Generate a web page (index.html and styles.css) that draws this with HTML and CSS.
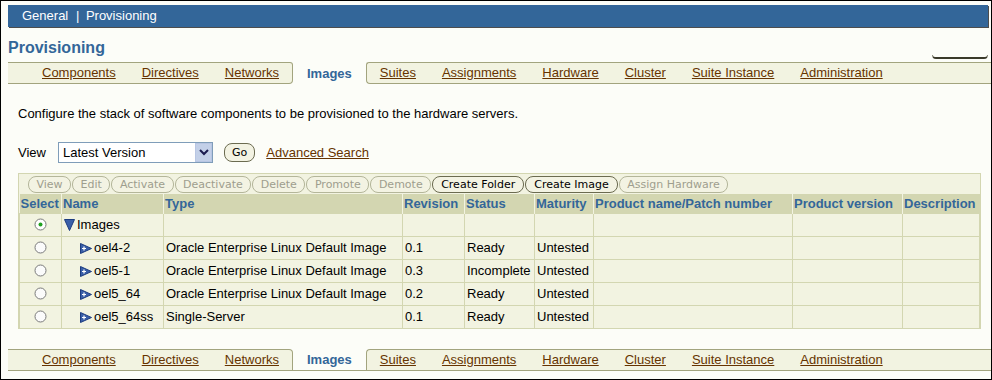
FILE: index.html
```html
<!DOCTYPE html>
<html lang="en">

<head>
    <meta charset="UTF-8">
    <title>Provisioning - Images</title>
    <link rel="stylesheet" href="styles.css">
</head>

<body>
    <div class="frame">

        <div class="global-bar">
            <span>General</span>
            <span class="sep">|</span>
            <span>Provisioning</span>
        </div>

        <div class="title-row">
            <h1>Provisioning</h1>
            <div class="cut-btn"></div>
        </div>

        <!-- barra de abas superior -->
        <div class="subtabs top">
            <div class="seg seg-left">
                <a href="#">Components</a>
                <a href="#">Directives</a>
                <a href="#">Networks</a>
            </div>
            <div class="tab-current">Images</div>
            <div class="seg seg-right">
                <a href="#">Suites</a>
                <a href="#">Assignments</a>
                <a href="#">Hardware</a>
                <a href="#">Cluster</a>
                <a href="#">Suite Instance</a>
                <a href="#">Administration</a>
            </div>
        </div>

        <p class="intro">Configure the stack of software components to be provisioned to the hardware servers.</p>

        <div class="view-row">
            <label for="viewSelect">View</label>
            <div class="fake-select" id="viewSelect">
                <span>Latest Version</span>
                <span class="arrow">
                    <svg width="10" height="8" viewBox="0 0 10 8"><path d="M1 2 L5 6 L9 2" fill="none" stroke="#1c1c50" stroke-width="2"/></svg>
                </span>
            </div>
            <button class="pill">Go</button>
            <a href="#" class="adv">Advanced Search</a>
        </div>

        <div class="results">
            <div class="toolbar">
                <button class="pill off">View</button>
                <button class="pill off">Edit</button>
                <button class="pill off">Activate</button>
                <button class="pill off">Deactivate</button>
                <button class="pill off">Delete</button>
                <button class="pill off">Promote</button>
                <button class="pill off">Demote</button>
                <button class="pill">Create Folder</button>
                <button class="pill">Create Image</button>
                <button class="pill off">Assign Hardware</button>
            </div>
            <table>
                <thead>
                    <tr>
                        <th class="c-sel">Select</th>
                        <th class="c-name">Name</th>
                        <th class="c-type">Type</th>
                        <th class="c-rev">Revision</th>
                        <th class="c-status">Status</th>
                        <th class="c-mat">Maturity</th>
                        <th class="c-prod">Product name/Patch number</th>
                        <th class="c-pver">Product version</th>
                        <th class="c-desc">Description</th>
                    </tr>
                </thead>
                <tbody>
                    <tr>
                        <td class="radio-cell">
                            <svg width="13" height="13" viewBox="0 0 13 13"><circle cx="6.5" cy="6.5" r="5.5" fill="#fff" stroke="#7a7a7a"/><circle cx="6.5" cy="6.5" r="2" fill="#21a121"/></svg>
                        </td>
                        <td class="name">
                            <svg class="tri" width="11" height="12" viewBox="0 0 11 12"><path d="M0.5 0.5 H10.5 L5.5 11.5 Z" fill="#3a5fa8" stroke="#1d3c80"/></svg>Images
                        </td>
                        <td></td><td></td><td></td><td></td><td></td><td></td><td></td>
                    </tr>
                    <tr>
                        <td class="radio-cell"><svg width="13" height="13" viewBox="0 0 13 13"><circle cx="6.5" cy="6.5" r="5.5" fill="#fbfbfb" stroke="#7a7a7a"/></svg></td>
                        <td class="name child"><svg class="tri" width="12" height="11" viewBox="0 0 12 11"><path d="M0.5 0.5 L11.5 5.5 L0.5 10.5 Z" fill="#3a5fa8" stroke="#1d3c80"/><path d="M2 5.5 H6 M4 3.5 V7.5" stroke="#fff" stroke-width="1.2"/></svg>oel4-2</td>
                        <td>Oracle Enterprise Linux Default Image</td>
                        <td>0.1</td><td>Ready</td><td>Untested</td><td></td><td></td><td></td>
                    </tr>
                    <tr>
                        <td class="radio-cell"><svg width="13" height="13" viewBox="0 0 13 13"><circle cx="6.5" cy="6.5" r="5.5" fill="#fbfbfb" stroke="#7a7a7a"/></svg></td>
                        <td class="name child"><svg class="tri" width="12" height="11" viewBox="0 0 12 11"><path d="M0.5 0.5 L11.5 5.5 L0.5 10.5 Z" fill="#3a5fa8" stroke="#1d3c80"/><path d="M2 5.5 H6 M4 3.5 V7.5" stroke="#fff" stroke-width="1.2"/></svg>oel5-1</td>
                        <td>Oracle Enterprise Linux Default Image</td>
                        <td>0.3</td><td>Incomplete</td><td>Untested</td><td></td><td></td><td></td>
                    </tr>
                    <tr>
                        <td class="radio-cell"><svg width="13" height="13" viewBox="0 0 13 13"><circle cx="6.5" cy="6.5" r="5.5" fill="#fbfbfb" stroke="#7a7a7a"/></svg></td>
                        <td class="name child"><svg class="tri" width="12" height="11" viewBox="0 0 12 11"><path d="M0.5 0.5 L11.5 5.5 L0.5 10.5 Z" fill="#3a5fa8" stroke="#1d3c80"/><path d="M2 5.5 H6 M4 3.5 V7.5" stroke="#fff" stroke-width="1.2"/></svg>oel5_64</td>
                        <td>Oracle Enterprise Linux Default Image</td>
                        <td>0.2</td><td>Ready</td><td>Untested</td><td></td><td></td><td></td>
                    </tr>
                    <tr>
                        <td class="radio-cell"><svg width="13" height="13" viewBox="0 0 13 13"><circle cx="6.5" cy="6.5" r="5.5" fill="#fbfbfb" stroke="#7a7a7a"/></svg></td>
                        <td class="name child"><svg class="tri" width="12" height="11" viewBox="0 0 12 11"><path d="M0.5 0.5 L11.5 5.5 L0.5 10.5 Z" fill="#3a5fa8" stroke="#1d3c80"/><path d="M2 5.5 H6 M4 3.5 V7.5" stroke="#fff" stroke-width="1.2"/></svg>oel5_64ss</td>
                        <td>Single-Server</td>
                        <td>0.1</td><td>Ready</td><td>Untested</td><td></td><td></td><td></td>
                    </tr>
                </tbody>
            </table>
        </div>

        <!-- barra de abas inferior -->
        <div class="subtabs bottom">
            <div class="seg seg-left">
                <a href="#">Components</a>
                <a href="#">Directives</a>
                <a href="#">Networks</a>
            </div>
            <div class="tab-current">Images</div>
            <div class="seg seg-right">
                <a href="#">Suites</a>
                <a href="#">Assignments</a>
                <a href="#">Hardware</a>
                <a href="#">Cluster</a>
                <a href="#">Suite Instance</a>
                <a href="#">Administration</a>
            </div>
        </div>

    </div>
</body>

</html>
```

FILE: styles.css
```css
body,
html {
    margin: 0;
    padding: 0;
    font-family: "Liberation Sans", Arial, sans-serif;
    font-size: 12px;
    background: #fcfdf8;
}

.frame {
    box-sizing: border-box;
    width: 992px;
    height: 380px;
    border: 1px solid #000;
    background: #fcfdf8;
    overflow: hidden;
}

.global-bar {
    height: 22px;
    margin: 4px 3px 0 7px;
    padding-left: 14px;
    background: #336699;
    box-shadow: 1px 1px 0 #4d4d4d;
    color: #fff;
    font-size: 13px;
    line-height: 22px;
}

.global-bar .sep {
    margin: 0 3px 0 4px;
}

.title-row {
    display: flex;
    justify-content: space-between;
    align-items: flex-end;
    height: 32px;
    margin-left: 7px;
}

h1 {
    margin: 0 0 2px 0;
    font-size: 16px;
    line-height: 18px;
    color: #336699;
}

.cut-btn {
    width: 54px;
    height: 2px;
    margin: 0 3px 0 0;
    border-bottom: 2px solid #3a3a2a;
    border-left: 1px solid #8a8a7a;
    border-right: 1px solid #8a8a7a;
    border-radius: 0 0 4px 4px;
}

/* abas */
.subtabs {
    display: flex;
    height: 22px;
    margin: 3px 0 0 7px;
    font-size: 13px;
}

.seg {
    display: flex;
    box-sizing: border-box;
    height: 22px;
    background: #f2f3e1;
    border-top: 1px solid #a2a47e;
    border-bottom: 1px solid #a2a47e;
}

.seg-left {
    padding-left: 21px;
    border-right: 1px solid #a2a47e;
}

.seg-right {
    flex: 1;
    border-left: 1px solid #a2a47e;
}

.top .seg-left {
    border-radius: 0 3px 4px 0;
}

.top .seg-right {
    border-radius: 3px 0 0 4px;
}

.bottom .seg-left {
    border-radius: 0 4px 0 0;
}

.bottom .seg-right {
    border-radius: 4px 0 0 0;
}

.seg a {
    padding: 0 13px;
    line-height: 20px;
    color: #663300;
}

.tab-current {
    box-sizing: border-box;
    height: 22px;
    padding: 2px 14px 0 14px;
    color: #336699;
    font-weight: bold;
    line-height: 20px;
}

.bottom .tab-current {
    border-bottom: 1px solid #a2a47e;
    padding-top: 1px;
}

.intro {
    margin: 22px 0 0 17px;
    font-size: 13px;
    line-height: 16px;
    color: #000;
}

.view-row {
    display: flex;
    align-items: center;
    margin: 19px 0 0 17px;
    height: 22px;
    font-size: 13px;
}

.view-row label {
    width: 40px;
}

.fake-select {
    box-sizing: border-box;
    display: flex;
    align-items: center;
    justify-content: space-between;
    width: 155px;
    height: 21px;
    border: 1px solid #7f9db9;
    background: #fff;
    padding-left: 4px;
}

.fake-select .arrow {
    box-sizing: border-box;
    display: flex;
    align-items: center;
    justify-content: center;
    width: 17px;
    height: 19px;
    background: #c3d0e8;
    border: 1px solid #b8c6e3;
}

.pill {
    box-sizing: border-box;
    height: 17px;
    padding: 0 8px;
    font-family: "DejaVu Sans", Verdana, sans-serif;
    font-size: 11px;
    line-height: 15px;
    color: #000;
    background: #f3f3e3;
    border: 1px solid #6b6b50;
    border-radius: 8px;
}

.view-row .pill {
    height: 19px;
    margin-left: 11px;
    padding: 0 7px;
}

.adv {
    margin-left: 11px;
    color: #663300;
}

/* tabela */
.results {
    box-sizing: border-box;
    width: 963px;
    margin: 10px 0 0 17px;
    border: 1px solid #d3d6b1;
    border-bottom: none;
    background: #f2f3e1;
}

.toolbar {
    display: flex;
    gap: 1px;
    height: 20px;
    padding: 2px 0 0 9px;
    box-sizing: border-box;
}

.toolbar .pill.off {
    padding: 0 7.5px;
}

.pill.off {
    color: #9e9e8e;
    border-color: #b4b69a;
}

table {
    width: 100%;
    table-layout: fixed;
    border-collapse: collapse;
    font-size: 13px;
}

th {
    box-sizing: border-box;
    height: 19px;
    padding: 0 1px;
    background: #d3d6b1;
    color: #336699;
    text-align: left;
    border-left: 1px solid #f2f3e1;
    white-space: nowrap;
    overflow: hidden;
}

th:first-child {
    border-left: none;
}

td {
    height: 22px;
    padding: 0 2px;
    border: 1px solid #d3d6b1;
    color: #000;
    white-space: nowrap;
}

.c-sel { width: 42px; }
.c-name { width: 102px; }
.c-type { width: 239px; }
.c-rev { width: 62px; }
.c-status { width: 70px; }
.c-mat { width: 59px; }
.c-prod { width: 199px; }
.c-pver { width: 110px; }

.radio-cell {
    text-align: center;
    line-height: 0;
}

.name .tri {
    vertical-align: -2px;
    margin-right: 2px;
}

.name.child {
    padding-left: 18px;
}

.subtabs.bottom {
    margin-top: 20px;
}
```
